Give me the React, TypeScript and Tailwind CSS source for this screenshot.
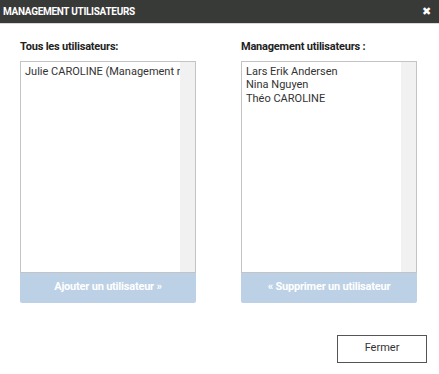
import React from "react";

const users = ["Julie CAROLINE (Management restaurant)"];
const managers = ["Lars Erik Andersen", "Nina Nguyen", "Théo CAROLINE"];

function ListBox({ items }: { items: string[] }) {
  return (
    <div className="flex h-[212px] border border-[#c4c4c4] bg-white">
      <div className="flex-1 overflow-hidden pl-[4px] pt-[3px]">
        {items.map((el, index) => (
          <div key={index} className="whitespace-nowrap text-[11px] leading-[13.5px] text-[#333]">
            {el}
          </div>
        ))}
      </div>
      <div className="w-[15px] bg-[#f1f1f1]" />
    </div>
  );
}

export default function App() {
  return (
    <div className="w-[439px] h-[374px] bg-white font-['Roboto',sans-serif] flex flex-col">
      <div className="h-[24px] bg-[#383a38] border-b border-[#d8d8d8] flex items-center justify-between pl-[3px] pr-[8px]">
        <span className="text-white font-bold text-[10px] tracking-[-0.3px]">MANAGEMENT UTILISATEURS</span>
        <span className="text-white text-[11px] leading-none">✖</span>
      </div>

      <div className="grid grid-cols-[176px_176px] gap-[45px] pl-[20px] pt-[15px]">
        <div className="flex flex-col">
          <p className="text-[11px] font-bold text-[#222] mb-[5px] tracking-[-0.2px]">Tous les utilisateurs:</p>
          <ListBox items={users} />
          <button className="h-[30px] bg-[#bcd1e5] text-white text-[11px] font-bold tracking-[-0.2px] rounded-b-[2px]">
            Ajouter un utilisateur »
          </button>
        </div>
        <div className="flex flex-col">
          <p className="text-[11px] font-bold text-[#222] mb-[5px] tracking-[-0.2px]">Management utilisateurs :</p>
          <ListBox items={managers} />
          <button className="h-[30px] bg-[#bcd1e5] text-white text-[11px] font-bold tracking-[-0.2px] rounded-b-[2px]">
            « Supprimer un utilisateur
          </button>
        </div>
      </div>

      <div className="flex justify-end pr-[12px] pt-[32px]">
        <button className="w-[90px] h-[28px] border border-[#555] text-[11px] text-[#333] bg-white">
          Fermer
        </button>
      </div>
    </div>
  );
}
